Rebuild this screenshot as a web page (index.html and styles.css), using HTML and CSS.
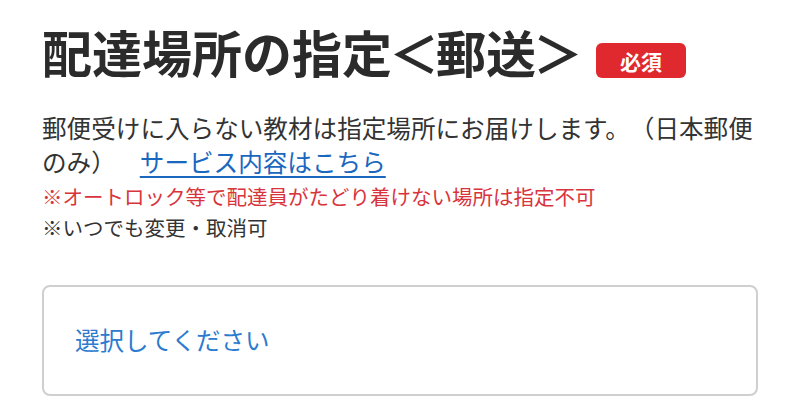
FILE: index.html
```html
<!DOCTYPE html>
<html lang="ja">
<head>
<meta charset="utf-8">
<link rel="stylesheet" href="styles.css">
</head>
<body>
<main class="section">
  <div class="heading">
    <h1 class="title">配達場所の指定<span class="bracket">＜</span>郵送<span class="bracket">＞</span></h1>
    <span class="badge">必須</span>
  </div>
  <p class="desc">郵便受けに入らない教材は指定場所にお届けします。（日本郵便のみ）<a class="link" href="#">サービス内容はこちら</a></p>
  <p class="note note-red">※オートロック等で配達員がたどり着けない場所は指定不可</p>
  <p class="note">※いつでも変更・取消可</p>
  <div class="select">
    <span class="placeholder">選択してください</span>
  </div>
</main>
</body>
</html>
```
FILE: styles.css
```css
html, body {
  margin: 0;
  padding: 0;
  background: #ffffff;
}
body {
  font-family: "Noto Sans CJK JP", "Noto Sans", sans-serif;
  color: #333333;
  text-spacing-trim: space-all;
}
.section {
  padding: 21px 42px 0 42px;
  width: 716px;
}
.heading {
  display: flex;
  align-items: flex-start;
  height: 60px;
}
.title {
  margin: 0;
  font-size: 50px;
  line-height: 60px;
  font-weight: 700;
  letter-spacing: 0;
  color: #2b2b2b;
  white-space: nowrap;
}
.bracket {
  display: inline-block;
  margin: 0 -3px;
}
.badge {
  margin-left: 16px;
  margin-top: 22px;
  width: 90px;
  height: 35px;
  border-radius: 6px;
  background: #e0292e;
  color: #ffffff;
  font-size: 21px;
  font-weight: 700;
  display: flex;
  align-items: center;
  justify-content: center;
}
.desc {
  margin: 29px 0 0 0;
  font-size: 24.6px;
  line-height: 34px;
  color: #333333;
}
.link {
  margin-left: 24px;
  color: #1a67c0;
  text-decoration: underline;
  text-underline-offset: 4px;
  text-decoration-thickness: 2px;
}
.note {
  margin: 0;
  font-size: 20.5px;
  line-height: 31px;
  color: #333333;
}
.note-red {
  margin-top: 3px;
  color: #d8343c;
}
.select {
  margin-top: 42px;
  height: 107px;
  border: 2px solid #cfcfcf;
  border-radius: 8px;
  display: flex;
  align-items: center;
  padding-left: 31px;
}
.placeholder {
  font-size: 24.5px;
  color: #2b7bcf;
  line-height: 34px;
  margin-top: -2px;
}
```
